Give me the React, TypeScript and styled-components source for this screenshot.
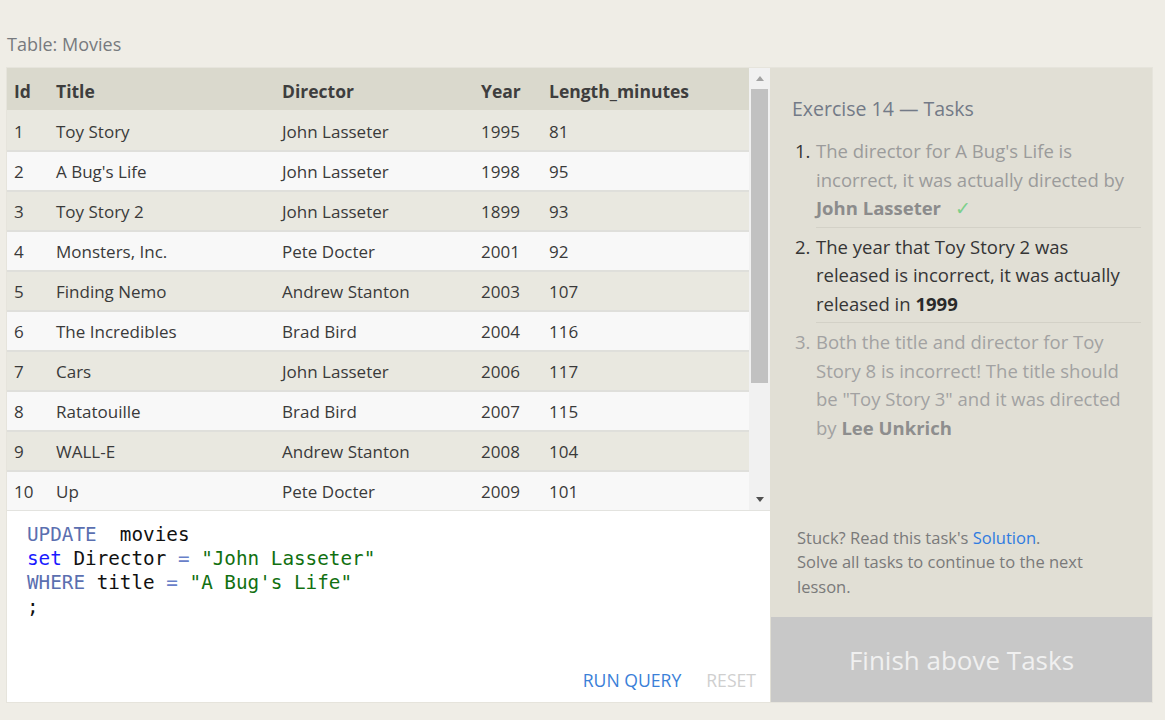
import React from "react";
import styled, { createGlobalStyle } from "styled-components";

const GlobalStyle = createGlobalStyle`
  html, body { margin: 0; padding: 0; }
  body {
    background: #efede6;
    font-family: "Open Sans", "Noto Sans", sans-serif;
    color: #333;
  }
  * { box-sizing: border-box; }
`;

const Page = styled.div`
  padding: 0 0 0 6px;
  width: 1165px;
`;

const Caption = styled.div`
  padding: 32px 0 0 1px;
  height: 67px;
  font-size: 18px;
  line-height: 24px;
  color: #777a7e;
`;

const Frame = styled.div`
  display: flex;
  width: 1147px;
  height: 636px;
  border: 1px solid #e6e4dc;
`;

const LeftColumn = styled.div`
  display: flex;
  flex-direction: column;
  width: 763px;
`;

const TableArea = styled.div`
  display: flex;
  height: 443px;
  border-bottom: 1px solid #e3e3df;
`;

const Table = styled.div`
  flex: 1;
  overflow: hidden;
`;

const cols = "42px 226px 199px 68px 1fr";

const HeaderRow = styled.div`
  display: grid;
  grid-template-columns: ${cols};
  height: 42px;
  padding-top: 4px;
  align-items: center;
  background: #dad9cd;
  font-weight: 700;
  font-size: 17.5px;
  color: #3e3e3e;
`;

const Row = styled.div<{ $alt: boolean }>`
  display: grid;
  grid-template-columns: ${cols};
  height: 40px;
  align-items: center;
  background: ${(p) => (p.$alt ? "#f8f8f8" : "#e9e8e0")};
  border-top: 2px solid #dfdfdb;
  font-size: 17px;
  color: #3a3a3a;
  &:first-child { border-top-color: transparent; }
`;

const Cell = styled.div`
  padding: 0 7px;
  white-space: nowrap;
`;

const ScrollBar = styled.div`
  width: 21px;
  background: #f1f1f1;
  display: flex;
  flex-direction: column;
  align-items: center;
`;

const Arrow = styled.div<{ $down?: boolean; $dark?: boolean }>`
  height: 21px;
  width: 100%;
  display: flex;
  align-items: center;
  justify-content: center;
  &::after {
    content: "";
    width: 0;
    height: 0;
    border-left: 4px solid transparent;
    border-right: 4px solid transparent;
    ${(p) =>
      p.$down
        ? `border-top: 5px solid ${p.$dark ? "#505050" : "#a3a3a3"};`
        : `border-bottom: 5px solid ${p.$dark ? "#505050" : "#a3a3a3"};`}
  }
`;

const Track = styled.div`
  flex: 1;
  width: 100%;
  padding: 0 2px;
`;

const Thumb = styled.div`
  height: 294px;
  background: #c1c1c1;
`;

const Editor = styled.div`
  flex: 1;
  background: #fff;
  display: flex;
  flex-direction: column;
  padding: 12px 14px 10px 20px;
`;

const Code = styled.pre`
  flex: 1;
  margin: 0;
  font-family: "DejaVu Sans Mono", "Liberation Mono", monospace;
  font-size: 19.3px;
  line-height: 24px;
  color: #111;
`;

const Kw = styled.span`
  color: #5b6fb0;
`;
const Set = styled.span`
  color: #1a1aff;
`;
const Op = styled.span`
  color: #6880c8;
`;
const Str = styled.span`
  color: #117011;
`;

const Actions = styled.div`
  display: flex;
  justify-content: flex-end;
  gap: 25px;
`;

const ActionButton = styled.span<{ $disabled?: boolean }>`
  font-size: 17.6px;
  line-height: 24px;
  color: ${(p) => (p.$disabled ? "#cfcfcf" : "#3a80d8")};
  text-transform: uppercase;
  cursor: pointer;
`;

const RightPanel = styled.div`
  width: 382px;
  background: #e1dfd5;
  display: flex;
  flex-direction: column;
`;

const PanelBody = styled.div`
  flex: 1;
  padding: 27px 11px 0 22px;
  display: flex;
  flex-direction: column;
`;

const PanelTitle = styled.div`
  font-size: 19.5px;
  line-height: 28px;
  color: #737a87;
  margin-bottom: 9px;
`;

const TaskList = styled.ol`
  list-style: none;
  margin: 0;
  padding: 0 0 0 3px;
`;

type State = "done" | "active" | "todo";

const Task = styled.li<{ $state: State }>`
  display: grid;
  grid-template-columns: 21px 1fr;
  font-size: 18.5px;
  line-height: 28.5px;
  color: ${(p) =>
    p.$state === "done" ? "#9b9b9b" : p.$state === "active" ? "#353535" : "#a2a2a2"};
  b {
    font-weight: 700;
    color: ${(p) =>
      p.$state === "done" ? "#8c8c8c" : p.$state === "active" ? "#2a2a2a" : "#8e8e8e"};
  }
`;

const TaskNum = styled.span<{ $state: State }>`
  padding-top: 5px;
  color: ${(p) => (p.$state === "todo" ? "#a2a2a2" : "#353535")};
`;

const TaskText = styled.div<{ $last?: boolean }>`
  padding: 5px 0 4px;
  border-bottom: 1px solid ${(p) => (p.$last ? "transparent" : "#d3d1c7")};
`;

const Check = styled.span`
  color: #7ccf8a;
  margin-left: 14px;
`;

const Footer = styled.div`
  margin-top: auto;
  padding: 0 30px 18px 5px;
  font-size: 16.5px;
  line-height: 24.5px;
  color: #7a7a7a;
  a {
    color: #2f7be0;
    text-decoration: none;
  }
`;

const FinishButton = styled.div`
  height: 85px;
  margin-left: 1px;
  background: #c8c8c8;
  color: #f0f0f0;
  font-size: 26px;
  display: flex;
  align-items: center;
  justify-content: center;
`;

const rows: [number, string, string, number, number][] = [
  [1, "Toy Story", "John Lasseter", 1995, 81],
  [2, "A Bug's Life", "John Lasseter", 1998, 95],
  [3, "Toy Story 2", "John Lasseter", 1899, 93],
  [4, "Monsters, Inc.", "Pete Docter", 2001, 92],
  [5, "Finding Nemo", "Andrew Stanton", 2003, 107],
  [6, "The Incredibles", "Brad Bird", 2004, 116],
  [7, "Cars", "John Lasseter", 2006, 117],
  [8, "Ratatouille", "Brad Bird", 2007, 115],
  [9, "WALL-E", "Andrew Stanton", 2008, 104],
  [10, "Up", "Pete Docter", 2009, 101],
];

export default function App() {
  return (
    <Page>
      <GlobalStyle />
      <Caption>Table: Movies</Caption>
      <Frame>
        <LeftColumn>
          <TableArea>
            <Table>
              <HeaderRow>
                <Cell>Id</Cell>
                <Cell>Title</Cell>
                <Cell>Director</Cell>
                <Cell>Year</Cell>
                <Cell>Length_minutes</Cell>
              </HeaderRow>
              <div>
                {rows.map((r, i) => (
                  <Row key={r[0]} $alt={i % 2 === 1}>
                    {r.map((v, j) => (
                      <Cell key={j}>{v}</Cell>
                    ))}
                  </Row>
                ))}
              </div>
            </Table>
            <ScrollBar>
              <Arrow />
              <Track>
                <Thumb />
              </Track>
              <Arrow $down $dark />
            </ScrollBar>
          </TableArea>
          <Editor>
            <Code>
              <Kw>UPDATE</Kw>{"  movies\n"}
              <Set>set</Set>{" Director "}<Op>=</Op>{" "}<Str>"John Lasseter"</Str>{"\n"}
              <Kw>WHERE</Kw>{" title "}<Op>=</Op>{" "}<Str>"A Bug's Life"</Str>{"\n"}
              {";"}
            </Code>
            <Actions>
              <ActionButton>Run Query</ActionButton>
              <ActionButton $disabled>Reset</ActionButton>
            </Actions>
          </Editor>
        </LeftColumn>
        <RightPanel>
          <PanelBody>
            <PanelTitle>Exercise 14 — Tasks</PanelTitle>
            <TaskList>
              <Task $state="done">
                <TaskNum $state="done">1.</TaskNum>
                <TaskText>
                  The director for A Bug's Life is incorrect, it was actually directed by{" "}
                  <b>John Lasseter</b>
                  <Check>✓</Check>
                </TaskText>
              </Task>
              <Task $state="active">
                <TaskNum $state="active">2.</TaskNum>
                <TaskText>
                  The year that Toy Story 2 was released is incorrect, it was actually released in{" "}
                  <b>1999</b>
                </TaskText>
              </Task>
              <Task $state="todo">
                <TaskNum $state="todo">3.</TaskNum>
                <TaskText $last>
                  Both the title and director for Toy Story 8 is incorrect! The title should be "Toy
                  Story 3" and it was directed by <b>Lee Unkrich</b>
                </TaskText>
              </Task>
            </TaskList>
            <Footer>
              Stuck? Read this task's <a href="#">Solution</a>.
              <br />
              Solve all tasks to continue to the next lesson.
            </Footer>
          </PanelBody>
          <FinishButton>Finish above Tasks</FinishButton>
        </RightPanel>
      </Frame>
    </Page>
  );
}
